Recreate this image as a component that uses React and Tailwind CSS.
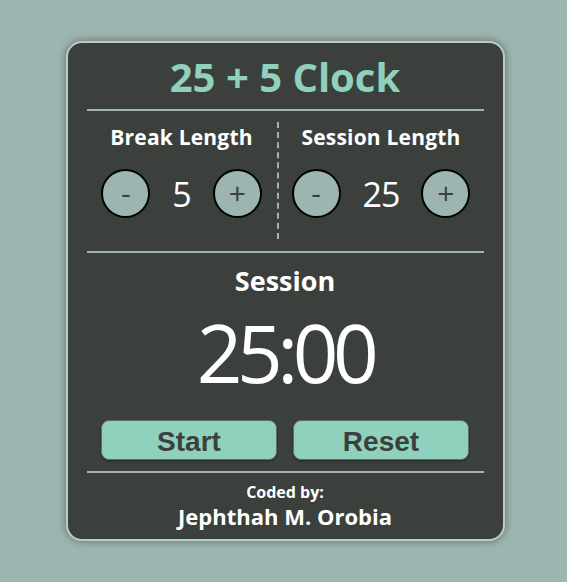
const Counter = ({ label, value, className = "" }) => (
  <div className={`flex flex-col items-center pt-[3px] pb-[21px] ${className}`}>
    <h2 className="text-[21px] font-bold leading-6 tracking-[0.2px] text-white">{label}</h2>
    <div className="mt-[20px] flex items-center gap-[22px]">
      <button className="flex h-[49px] w-[49px] items-center justify-center rounded-full border-2 border-black bg-[#9db5b0] pb-[3px] text-[30px] text-[#3b403d]">
        -
      </button>
      <span className="text-[34px] leading-none tracking-[-1px] text-white">{value}</span>
      <button className="flex h-[49px] w-[49px] items-center justify-center rounded-full border-2 border-black bg-[#9db5b0] pb-[3px] text-[30px] text-[#3b403d]">
        +
      </button>
    </div>
  </div>
);

export default function App() {
  return (
    <div className="flex h-screen items-center justify-center bg-[#9db5b0] pl-[3px] font-['Open_Sans',sans-serif]">
      <div className="w-[439px] rounded-[16px] border-2 border-[#bccbc7] bg-[#3b403d] px-[19px] pb-[9px] pt-[10px] shadow-[0_0_9px_rgba(0,0,0,0.4)]">
        <h1 className="text-center text-[40px] font-bold leading-[48px] text-[#8fd1bd]">25 + 5 Clock</h1>
        <div className="mt-[8px] h-[2px] bg-[#9db5b0]" />

        <div className="flex pt-[11px]">
          <Counter label="Break Length" value="5" className="w-[190px]" />
          <div className="w-0 border-l-2 border-dashed border-[#9db5b0]" />
          <Counter label="Session Length" value="25" className="flex-1" />
        </div>

        <div className="mt-[12px] h-[2px] bg-[#9db5b0]" />

        <div className="flex flex-col items-center">
          <h2 className="mt-[12px] text-[27px] font-bold leading-8 text-white">Session</h2>
          <div className="mt-[15px] text-[80px] leading-[80px] tracking-[-5.5px] text-white">25:00</div>
        </div>

        <div className="mt-[28px] flex justify-center gap-[16px]">
          <button className="h-[40px] w-[176px] rounded-[8px] border border-[#5f6d69] bg-[#8fd1bd] font-['Liberation_Sans',sans-serif] text-[28px] font-bold text-[#3b403d] shadow-[0_1px_2px_rgba(0,0,0,0.4)]">
            Start
          </button>
          <button className="h-[40px] w-[176px] rounded-[8px] border border-[#5f6d69] bg-[#8fd1bd] font-['Liberation_Sans',sans-serif] text-[28px] font-bold text-[#3b403d] shadow-[0_1px_2px_rgba(0,0,0,0.4)]">
            Reset
          </button>
        </div>

        <div className="mt-[11px] h-[2px] bg-[#9db5b0]" />

        <div className="flex flex-col items-center pt-[9px]">
          <p className="text-[16px] font-bold leading-5 text-white">Coded by:</p>
          <p className="text-[22px] font-bold leading-7 text-white">Jephthah M. Orobia</p>
        </div>
      </div>
    </div>
  );
}
